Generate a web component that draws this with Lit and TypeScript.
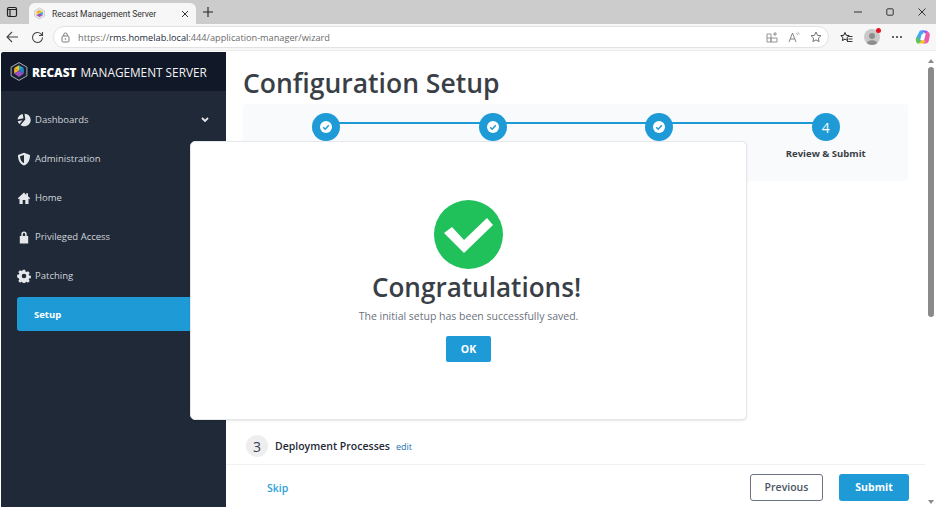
import { LitElement, html, css, svg } from "lit";
import { customElement } from "lit/decorators.js";

const checkSmall = html`<svg width="14" height="14" viewBox="0 0 14 14"><circle cx="7" cy="7" r="6" fill="#fff"/><path d="M4.200 7.200l2 2 3.600-3.900" fill="none" stroke="#1e9bd7" stroke-width="1.500"/></svg>`;

const navIcons: Record<string, unknown> = {
  dash: svg`<path d="M5.600.9A6.500 6.500 0 0 0 .6 6.600l5.900-1.400zM7.500.7c3.500 0 6.200 2.800 6.200 6.300 0 3.500-2.900 6.300-6.300 6.300-1.500 0-2.800-.5-3.900-1.300l4.800-5.600zM.7 8.200l4.800-.9-3 3.700C1.500 10.200 1 9.300.7 8.200z" fill="#e5e7eb"/>`,
  shield: svg`<path d="M7 .8l6 2.200c0 4.500-1.300 8.600-6 10.600C2.300 11.600 1 7.500 1 3z" fill="#e5e7eb"/><path d="M7 3v8.300C4.200 9.800 3.200 7.600 3 4.300z" fill="#1f2937"/>`,
  home: svg`<path d="M7 1.500L.8 7.300l.9.9.8-.7V13h3.200V9h2.600v4h3.200V7.500l.8.7.9-.9-2.200-2V2.300h-1.800v1.600z" fill="#e5e7eb"/>`,
  lock: svg`<path d="M4.300 6V4.300a2.700 2.700 0 0 1 5.400 0V6h1.500v7.500H2.800V6zm1.500 0h2.400V4.300a1.200 1.200 0 0 0-2.400 0z" fill="#e5e7eb" fill-rule="evenodd"/>`,
  gear: svg`<path d="M5.800.8h2.400l.3 1.800 1 .5 1.600-.9 1.600 1.700-1 1.500.4 1 1.800.4v2.400l-1.800.3-.4 1 1 1.600-1.700 1.600-1.500-1-1 .4-.3 1.800H5.800l-.3-1.800-1-.4-1.500 1-1.700-1.600 1-1.600-.4-1L.1 8.200V5.800l1.800-.4.4-1-1-1.500L3 1.200l1.500.9 1-.5zM7 4.700a2.300 2.300 0 1 0 0 4.600 2.300 2.300 0 0 0 0-4.600z" fill="#e5e7eb" fill-rule="evenodd"/>`,
};

const navItems = [
  { label: "Dashboards", icon: "dash", chevron: true },
  { label: "Administration", icon: "shield" },
  { label: "Home", icon: "home" },
  { label: "Privileged Access", icon: "lock" },
  { label: "Patching", icon: "gear" },
];

@customElement("app-root")
export class AppRoot extends LitElement {
  static styles = css`
    :host { display: block; width: 936px; height: 507px; overflow: hidden; font-family: "Open Sans", "Noto Sans", sans-serif; }
    * { box-sizing: border-box; }
    .frame { position: relative; width: 936px; height: 507px; display: flex; flex-direction: column; background: #fff; overflow: hidden; }
    .tabstrip { height: 24px; background: #cccccc; display: flex; align-items: flex-end; flex: none; }
    .tabs-btn { width: 24px; height: 24px; display: flex; align-items: center; justify-content: center; flex: none; }
    .tab { margin-left: 5px; width: 167px; height: 21px; background: #f7f7f7; border-radius: 6px 6px 0 0; display: flex; align-items: center; padding-left: 4px; font-family: Roboto, sans-serif; font-size: 8.500px; color: #333; flex: none; }
    .tab-title { margin-left: 6px; flex: 1; white-space: nowrap; }
    .tab-x { margin-right: 7px; display: flex; }
    .newtab { margin-left: 6px; width: 14px; height: 24px; display: flex; align-items: center; }
    .winctl { margin-left: auto; display: flex; align-items: center; height: 24px; padding-right: 10px; }
    .ctl { width: 8px; display: flex; margin-left: 24px; }
    .toolbar { height: 27px; background: #f7f7f7; display: flex; align-items: center; flex: none; border-bottom: 1px solid #ececec; }
    .navbtn { display: flex; flex: none; }
    .back { margin-left: 5px; }
    .reload { margin-left: 12px; }
    .addr { margin-left: 9px; width: 776px; height: 22px; border: 1px solid #e2e2e2; background: #fff; border-radius: 11px; display: flex; align-items: center; padding-left: 6px; font-size: 9.200px; flex: none; color: #6b6b6b; white-space: nowrap; }
    .url { margin-left: 7px; }
    .url b { font-weight: 400; color: #1c2b3a; }
    .addr-icons { margin-left: auto; display: flex; align-items: center; gap: 10px; padding-right: 6px; }
    .tools { display: flex; align-items: center; flex: none; }
    .t1 { margin-left: 11px; display: flex; }
    .avatar { position: relative; width: 16px; height: 16px; border-radius: 50%; background: #c9c9c9; overflow: hidden; display: block; }
    .avatar-wrap { margin-left: 11px; position: relative; display: flex; }
    .dot { position: absolute; top: -1px; right: -1px; width: 5px; height: 5px; border-radius: 50%; background: #e81123; }
    .more { margin-left: 12px; width: 10px; display: flex; gap: 2px; }
    .more i { width: 2px; height: 2px; background: #333; border-radius: 50%; display: block; }
    .copilot { margin-left: 13px; display: flex; }
    .app { flex: 1; display: flex; min-height: 0; padding-top: 1px; }
    .sidebar { width: 225px; margin-left: 1px; flex: none; background: #1f2937; border-radius: 3px 0 0 0; display: flex; flex-direction: column; }
    .brand { height: 39px; background: #111827; display: flex; align-items: center; padding-left: 9px; border-radius: 3px 0 0 0; color: #f3f4f6; font-size: 11.800px; white-space: nowrap; flex: none; }
    .brand b { margin-left: 4px; font-weight: 800; color: #fff; }
    .brand span { margin-left: 4px; }
    nav { padding: 9px 0 0 16px; display: flex; flex-direction: column; }
    .item { height: 39px; display: flex; align-items: center; color: #d1d5db; font-size: 9.500px; padding-right: 17px; }
    .item svg.ic { width: 14px; height: 14px; flex: none; margin-right: 4px; }
    .chev { margin-left: auto; display: flex; }
    .setup { height: 34px; margin-top: 2px; background: #1e9bd7; border-radius: 3px 0 0 3px; color: #fff; font-weight: 700; font-size: 9.500px; display: flex; align-items: center; padding-left: 17px; }
    .main { flex: 1; min-width: 0; display: flex; flex-direction: column; }
    .content { flex: 1; min-height: 0; padding: 0 16px 0 17px; display: flex; flex-direction: column; }
    h1 { margin: 13px 0 0; font-size: 26.500px; line-height: 37px; font-weight: 600; color: #3a3f47; white-space: nowrap; }
    .stepper { margin-top: 2px; height: 77px; width: 665px; background: #f9fafb; border-radius: 4px; flex: none; display: grid; grid-template-columns: repeat(4, 166.500px); justify-content: start; padding-top: 9px; }
    .step { display: flex; flex-direction: column; align-items: center; position: relative; }
    .step.link::after { content: ""; position: absolute; top: 9px; left: 50%; width: 100%; height: 2px; background: #1e9bd7; }
    .circle { width: 28px; height: 28px; border-radius: 50%; background: #1e9bd7; color: #fff; font-size: 14px; display: flex; align-items: center; justify-content: center; position: relative; z-index: 1; }
    .step-label { margin-top: 5px; font-size: 9.500px; line-height: 16px; font-weight: 700; color: #3a3f47; white-space: nowrap; }
    .section { margin-top: auto; height: 28px; margin-bottom: 4px; display: flex; align-items: center; font-size: 10.500px; font-weight: 600; color: #1f2937; padding-left: 3px; white-space: nowrap; }
    .num { width: 22px; height: 22px; border-radius: 50%; background: #eeeeee; color: #374151; font-size: 14px; font-weight: 400; display: flex; align-items: center; justify-content: center; margin-right: 7px; }
    .edit { margin-left: 6px; font-size: 9px; font-weight: 400; color: #1873b0; }
    .footer { height: 43px; border-top: 1px solid #f0f0f0; flex: none; display: flex; align-items: center; padding: 2px 16px 0 41px; font-size: 10.500px; }
    .skip { color: #2b9fd9; font-weight: 600; margin-top: 2px; }
    .btn { height: 27px; border-radius: 3px; display: flex; align-items: center; justify-content: center; font-weight: 600; }
    .prev { margin-left: auto; width: 73px; border: 1px solid #6b7280; color: #4b5563; background: #fff; }
    .submit { margin-left: 16px; width: 70px; background: #1e9bd7; color: #fff; font-weight: 700; }
    .scrollbar { width: 11px; flex: none; background: #fff; display: flex; flex-direction: column; align-items: center; padding-top: 7px; }
    .arrow { width: 0; height: 0; border-left: 3px solid transparent; border-right: 3px solid transparent; }
    .up { border-bottom: 4px solid #8a8a8a; }
    .down { border-top: 4px solid #8a8a8a; margin-top: auto; margin-bottom: 3px; }
    .thumb { width: 6px; height: 250px; background: #8a8a8a; border-radius: 3px; margin-top: 4px; }
    .modal { position: absolute; left: 190px; top: 141px; width: 557px; height: 279px; background: #fff; border: 1px solid #e5e7eb; border-radius: 5px; box-shadow: 0 1px 2px rgba(0,0,0,.1); display: flex; flex-direction: column; align-items: center; padding-top: 58px; z-index: 5; }
    .ok-circle { width: 69px; height: 69px; border-radius: 50%; background: #20c05a; display: flex; flex: none; }
    .congrats { margin: 1px 0 0 16px; font-size: 26.100px; line-height: 34px; font-weight: 600; color: #3a3f47; }
    .msg { margin-top: 4px; font-size: 10.500px; line-height: 16px; color: #6b7280; }
    .okbtn { margin-top: 12px; width: 45px; height: 26px; background: #1e9bd7; color: #fff; border-radius: 2px; font-size: 10.500px; font-weight: 700; display: flex; align-items: center; justify-content: center; }
  `;

  render() {
    return html`<div class="frame">
      <div class="tabstrip">
        <div class="tabs-btn"><svg width="12" height="12" viewBox="0 0 12 12"><rect x="1.500" y="1.500" width="9" height="9" rx="1.500" fill="none" stroke="#222" stroke-width="1.200"/><path d="M1.500 3.500h9M4 3.500v7" stroke="#222" stroke-width="1.200"/></svg></div>
        <div class="tab">
          <svg width="13" height="13" viewBox="0 0 13 13"><path d="M6.500 1l5 2.800v5.400l-5 2.800-5-2.800V3.800z" fill="#e8e8e8" stroke="#bbb" stroke-width=".6"/><path d="M6.500 3l3.200 1.800L6.500 6.500z" fill="#f5c518"/><path d="M3.300 4.800L6.500 3v3.500z" fill="#f09a2a"/><path d="M9.700 4.800v3.400L6.500 6.500z" fill="#2b9fd9"/><path d="M3.300 4.800v3.400l3.200-1.700z" fill="#f4d03f"/><path d="M3.300 8.200L6.500 10l3.200-1.800-3.200-1.700z" fill="#9b4fc4"/></svg>
          <span class="tab-title">Recast Management Server</span>
          <span class="tab-x"><svg width="8" height="8" viewBox="0 0 8 8"><path d="M1 1l6 6M7 1L1 7" stroke="#333" stroke-width="1"/></svg></span>
        </div>
        <div class="newtab"><svg width="12" height="12" viewBox="0 0 12 12"><path d="M6 1v10M1 6h10" stroke="#222" stroke-width="1.100"/></svg></div>
        <div class="winctl">
          <span class="ctl"><svg width="8" height="8" viewBox="0 0 8 8"><path d="M0 4h8" stroke="#333" stroke-width="1"/></svg></span>
          <span class="ctl"><svg width="8" height="8" viewBox="0 0 8 8"><rect x=".8" y=".8" width="6.400" height="6.400" rx="1" fill="none" stroke="#333" stroke-width="1"/></svg></span>
          <span class="ctl"><svg width="8" height="8" viewBox="0 0 8 8"><path d="M.5.5l7 7M7.500.5l-7 7" stroke="#333" stroke-width="1"/></svg></span>
        </div>
      </div>
      <div class="toolbar">
        <span class="navbtn back"><svg width="14" height="14" viewBox="0 0 14 14"><path d="M13 7H2M7 2L2 7l5 5" fill="none" stroke="#444" stroke-width="1.100"/></svg></span>
        <span class="navbtn reload"><svg width="13" height="13" viewBox="0 0 13 13"><path d="M11.500 6.500a5 5 0 1 1-1.500-3.600L11.500 4.500M11.500 1v3.500H8" fill="none" stroke="#444" stroke-width="1.100"/></svg></span>
        <div class="addr">
          <svg width="11" height="11" viewBox="0 0 11 11"><rect x="2" y="4" width="7" height="6" rx="1.200" fill="none" stroke="#777" stroke-width="1"/><path d="M3.700 4V2.800a1.800 1.800 0 0 1 3.600 0V4" fill="none" stroke="#777"/><circle cx="5.500" cy="7" r=".8" fill="#777"/></svg>
          <span class="url">https://<b>rms.homelab.local</b>:444/application-manager/wizard</span>
          <span class="addr-icons">
            <svg width="12" height="12" viewBox="0 0 12 12"><path d="M1 3h4v8H1zM5 7h6v4H5zM1 7h4" fill="none" stroke="#888" stroke-width=".9"/><path d="M9 1v4M7 3h4" stroke="#888" stroke-width=".9"/></svg>
            <svg width="12" height="12" viewBox="0 0 12 12"><path d="M1 11L4.500 2 8 11M2.200 8h4.600" fill="none" stroke="#777" stroke-width=".9"/><path d="M8 2c1 .4 1.500 1 1.700 2M9.500 1c1 .5 1.500 1.300 1.700 2.500" fill="none" stroke="#999" stroke-width=".7"/></svg>
            <svg width="12" height="12" viewBox="0 0 12 12"><path d="M6 1l1.500 3.300 3.500.4-2.600 2.400.7 3.500L6 8.900l-3.100 1.700.7-3.500L1 4.700l3.500-.4z" fill="none" stroke="#666" stroke-width=".9"/></svg>
          </span>
        </div>
        <div class="tools">
          <span class="t1"><svg width="13" height="13" viewBox="0 0 13 13"><path d="M5 1.500l1.200 2.800 3 .3-2.200 2 .6 3L5 8.100l-2.600 1.500.6-3-2.200-2 3-.3z" fill="none" stroke="#222" stroke-width="1"/><path d="M8.500 5.500H12.500M8.500 8h4M7 10.500h5.500" stroke="#222" stroke-width=".9"/></svg></span>
          <span class="avatar-wrap"><span class="avatar"><svg width="16" height="16" viewBox="0 0 16 16"><circle cx="8" cy="6" r="3" fill="#8e8e8e"/><ellipse cx="8" cy="14" rx="5.500" ry="3.800" fill="#8e8e8e"/></svg></span><i class="dot"></i></span>
          <span class="more"><i></i><i></i><i></i></span>
          <span class="copilot"><svg width="16" height="16" viewBox="0 0 16 16"><path d="M5 1.500h4L6 13H3.500C1.500 13 .5 11 1 9z" fill="#3fa9f5"/><path d="M6.500 1.500h4c1.500 0 2.500 1 3 2.500l-3 .5z" fill="#8a5cf0"/><path d="M11 3h1.500c1.500 0 2.700 1.500 2.300 3.500L14 11c-.3 2-1.700 3.500-3.500 3.500H8z" fill="#e85dad"/><path d="M1 9l2.500-.5L5 14.500H3c-1.500 0-2.500-2-2-5.500z" fill="#5fc74d"/><path d="M8 14.500H4.500L6 11l5 1z" fill="#f5c518"/><path d="M6.800 5h3.700L9 11H5.200z" fill="#fff"/></svg></span>
        </div>
      </div>
      <div class="app">
        <aside class="sidebar">
          <div class="brand">
            <svg width="18" height="19" viewBox="0 0 18 19"><path d="M9 .6l7.900 4.500v8.800L9 18.400 1.100 13.900V5.100z" fill="#1a2230" stroke="#a8adb5" stroke-width="1"/><path d="M9 3.200l4.800 2.800L9 8.800z" fill="#2b9fd9"/><path d="M4.200 6L9 3.200v5.600z" fill="#f5c518"/><path d="M4.200 6v5.600L9 8.800z" fill="#f0b429"/><path d="M13.800 6v5.600L9 8.800z" fill="#2487cc"/><path d="M4.200 11.600L9 14.900l4.800-3.300L9 8.800z" fill="#9b4fc4"/></svg>
            <b>RECAST</b><span>MANAGEMENT SERVER</span>
          </div>
          <nav>
            ${navItems.map(
              (n) => html`<div class="item">
                <svg class="ic" viewBox="0 0 14 14">${navIcons[n.icon]}</svg>
                <span>${n.label}</span>
                ${n.chevron
                  ? html`<span class="chev"><svg width="8" height="6" viewBox="0 0 8 6"><path d="M1 1l3 3 3-3" fill="none" stroke="#e5e7eb" stroke-width="1.800"/></svg></span>`
                  : ""}
              </div>`
            )}
            <div class="setup">Setup</div>
          </nav>
        </aside>
        <main class="main">
          <div class="content">
            <h1>Configuration Setup</h1>
            <div class="stepper">
              <div class="step link"><div class="circle">${checkSmall}</div></div>
              <div class="step link"><div class="circle">${checkSmall}</div></div>
              <div class="step link"><div class="circle">${checkSmall}</div></div>
              <div class="step"><div class="circle">4</div><div class="step-label">Review &amp; Submit</div></div>
            </div>
            <div class="section"><span class="num">3</span>Deployment Processes<span class="edit">edit</span></div>
          </div>
          <div class="footer">
            <span class="skip">Skip</span>
            <span class="btn prev">Previous</span>
            <span class="btn submit">Submit</span>
          </div>
        </main>
        <div class="scrollbar"><i class="arrow up"></i><div class="thumb"></div><i class="arrow down"></i></div>
      </div>
      <div class="modal">
        <div class="ok-circle"><svg width="69" height="69" viewBox="0 0 69 69"><path d="M10 33l8-6 12 13 23-22 6 7-29 28z" fill="#fff"/></svg></div>
        <div class="congrats">Congratulations!</div>
        <div class="msg">The initial setup has been successfully saved.</div>
        <div class="okbtn">OK</div>
      </div>
    </div>`;
  }
}
